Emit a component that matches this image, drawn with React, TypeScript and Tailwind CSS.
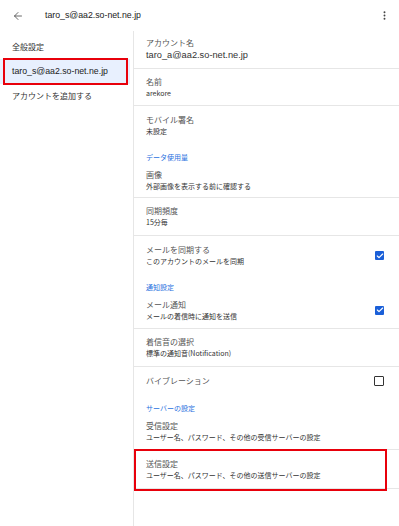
import { ArrowLeft, MoreVertical, Check } from "lucide-react";

type Row = { title: string; sub?: string; h: string; check?: "on" | "off"; border?: boolean; mark?: boolean };

function SettingRow({ row }: { row: Row }) {
    return (
        <div className={`relative flex items-center pl-[12px] pr-[15px] ${row.h} ${row.border ? "border-b border-[#e6e6e6]" : ""}`}>
            <div className="flex-1 flex flex-col">
                <span className="text-[8px] leading-[12px] text-[#555]">{row.title}</span>
                {row.sub && <span className="text-[7px] leading-[11px] text-[#333]">{row.sub}</span>}
            </div>
            {row.check === "on" && (
                <span className="w-[9px] h-[9px] rounded-[1px] bg-[#1a5fd8] flex items-center justify-center">
                    <Check size={8} strokeWidth={3.5} className="text-white" />
                </span>
            )}
            {row.check === "off" && <span className="w-[10px] h-[10px] rounded-[1px] border-[1.5px] border-[#333]" />}
            {row.mark && <span className="absolute left-0 right-[12px] top-[-1px] bottom-[-3px] border-2 border-[#e8000b]" />}
        </div>
    );
}

function Header({ text, h }: { text: string; h: string }) {
    return (
        <div className={`flex items-end pl-[12px] ${h}`}>
            <span className="text-[7px] leading-[10px] text-[#2a72e0]">{text}</span>
        </div>
    );
}

export default function App() {
    return (
        <div className="w-[399px] h-[526px] bg-white overflow-hidden" style={{ fontFamily: '"Noto Sans CJK JP", "Liberation Sans", sans-serif' }}>
            <div className="h-[31px] flex items-center pl-[12px] pr-[9px]">
                <ArrowLeft size={12} strokeWidth={1.6} className="text-[#444]" />
                <span className="ml-[21px] text-[8.75px] text-[#222] flex-1" style={{ fontFamily: '"Liberation Sans", "Noto Sans CJK JP", sans-serif' }}>taro_s@aa2.so-net.ne.jp</span>
                <MoreVertical size={11} strokeWidth={2.2} className="text-[#444]" />
            </div>
            <div className="flex h-[495px]">
                <div className="w-[133px] flex flex-col">
                    <div className="h-[28px] flex items-end pl-[12px] pb-[6px] text-[8px] text-[#333]">全般設定</div>
                    <div className="relative h-[25px] w-[130px] bg-[#e8f0fe] flex items-center pl-[12px] text-[8.75px] text-[#222]" style={{ fontFamily: '"Liberation Sans", "Noto Sans CJK JP", sans-serif' }}>
                        taro_s@aa2.so-net.ne.jp
                        <span className="absolute left-[3px] right-[2px] top-[-1px] bottom-[-1px] border-2 border-[#e8000b]" />
                    </div>
                    <div className="h-[24px] flex items-center pl-[12px] text-[8px] text-[#333]">アカウントを追加する</div>
                </div>
                <div className="flex-1 flex flex-col border-l border-[#e6e6e6]">
                    <div className="h-[38px] flex flex-col justify-center pl-[12px] border-b border-[#e6e6e6]">
                        <span className="text-[8px] leading-[12px] text-[#555]">アカウント名</span>
                        <span className="text-[9.25px] leading-[13px] text-[#333]" style={{ fontFamily: '"Liberation Sans", sans-serif' }}>taro_a@aa2.so-net.ne.jp</span>
                    </div>
                    <SettingRow row={{ title: "名前", sub: "arekore", h: "h-[37px]", border: true }} />
                    <SettingRow row={{ title: "モバイル署名", sub: "未設定", h: "h-[38px]" }} />
                    <Header text="データ使用量" h="h-[22px] pb-[4px]" />
                    <SettingRow row={{ title: "画像", sub: "外部画像を表示する前に確認する", h: "h-[32px] pb-[3px]", border: true }} />
                    <SettingRow row={{ title: "同期頻度", sub: "15分毎", h: "h-[38px]", border: true }} />
                    <SettingRow row={{ title: "メールを同期する", sub: "このアカウントのメールを同期", h: "h-[39px]", check: "on" }} />
                    <Header text="通知設定" h="h-[17px]" />
                    <SettingRow row={{ title: "メール通知", sub: "メールの着信時に通知を送信", h: "h-[37px]", check: "on", border: true }} />
                    <SettingRow row={{ title: "着信音の選択", sub: "標準の通知音(Notification)", h: "h-[38px]", border: true }} />
                    <SettingRow row={{ title: "バイブレーション", h: "h-[27px]", check: "off" }} />
                    <Header text="サーバーの設定" h="h-[19px]" />
                    <SettingRow row={{ title: "受信設定", sub: "ユーザー名、パスワード、その他の受信サーバーの設定", h: "h-[37px]", border: true }} />
                    <SettingRow row={{ title: "送信設定", sub: "ユーザー名、パスワード、その他の送信サーバーの設定", h: "h-[39px]", border: true, mark: true }} />
                </div>
            </div>
        </div>
    );
}
